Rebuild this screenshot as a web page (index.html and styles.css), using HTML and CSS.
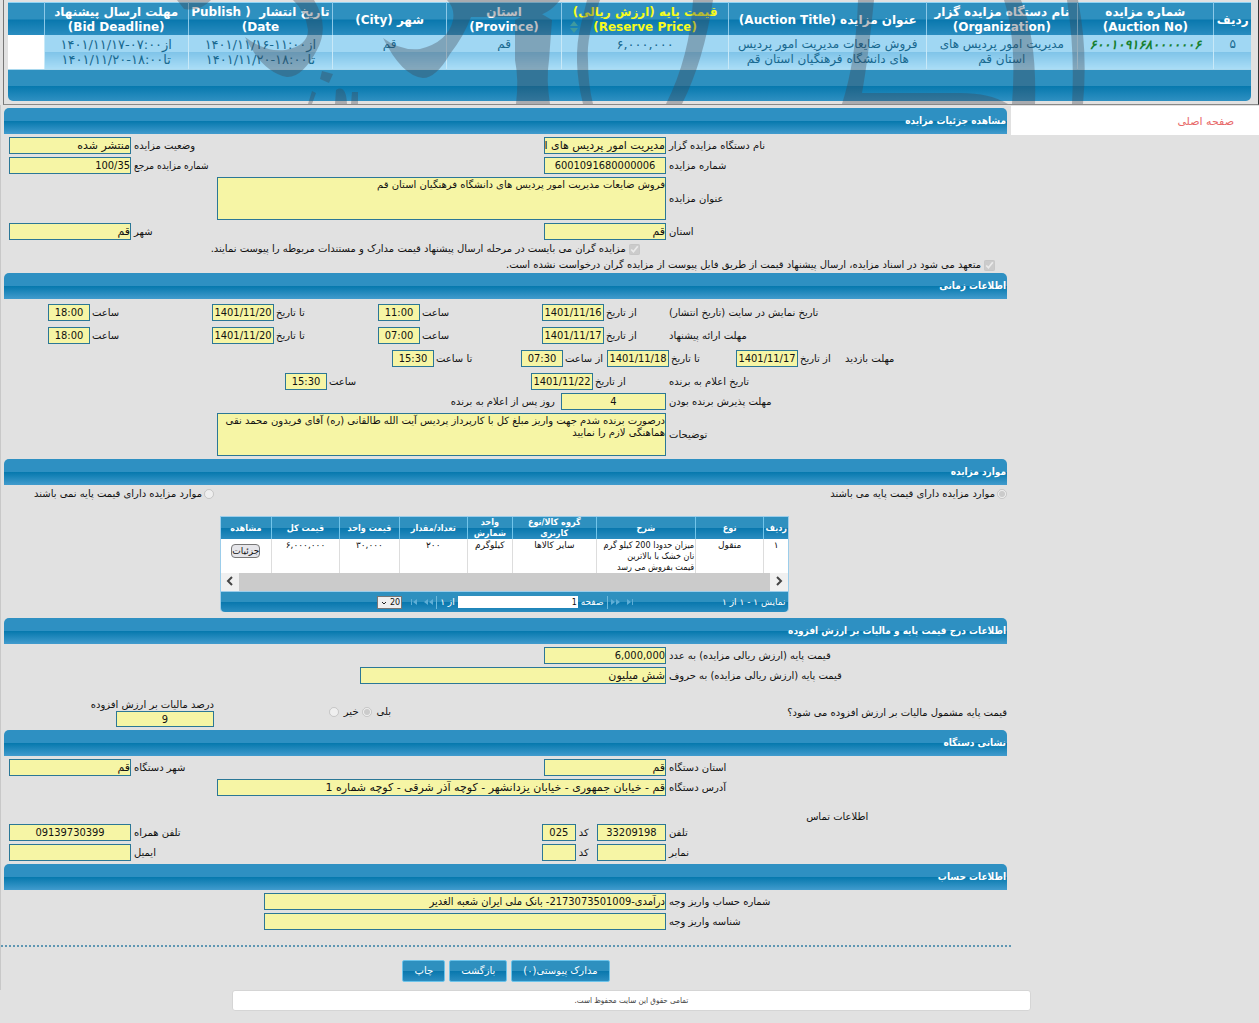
FILE: index.html
```html
<!DOCTYPE html>
<html lang="fa" dir="rtl">
<head>
<meta charset="utf-8">
<title>مشاهده جزئیات مزایده</title>
<meta name="viewport" content="width=device-width, initial-scale=1">
<link rel="stylesheet" href="styles.css">
</head>
<body>
<header class="summary">
  <table class="auctions">
    <colgroup><col class="a1"><col class="a2"><col class="a3"><col class="a4"><col class="a5"><col class="a6"><col class="a7"><col class="a8"><col class="a9"><col class="a10"></colgroup>
    <thead>
      <tr>
        <th>ردیف</th>
        <th>شماره مزایده<br>(Auction No)</th>
        <th>نام دستگاه مزایده گزار<br>(Organization)</th>
        <th>عنوان مزایده (Auction Title)</th>
        <th class="sorted">قیمت پایه (ارزش ریالی)<br>(Reserve Price)<svg class="sort" viewBox="0 0 8 12" aria-hidden="true"><path d="M4 0L8 5H0zM0 7H8L4 12z"/></svg></th>
        <th>استان<br>(Province)</th>
        <th>شهر (City)</th>
        <th>تاریخ انتشار&nbsp; ( Publish<br>Date)</th>
        <th>مهلت ارسال پیشنهاد<br>(Bid Deadline)</th>
        <th></th>
      </tr>
    </thead>
    <tbody>
      <tr>
        <td>۵</td>
        <td class="number">۶۰۰۱۰۹۱۶۸۰۰۰۰۰۰۶</td>
        <td>مدیریت امور پردیس های<br>استان قم</td>
        <td>فروش ضایعات مدیریت امور پردیس<br>های دانشگاه فرهنگیان استان قم</td>
        <td class="large">۶,۰۰۰,۰۰۰</td>
        <td>قم</td>
        <td>قم</td>
        <td class="large">از۱۱:۰۰-۱۴۰۱/۱۱/۱۶<br>تا۱۸:۰۰-۱۴۰۱/۱۱/۲۰</td>
        <td class="large">از۰۷:۰۰-۱۴۰۱/۱۱/۱۷<br>تا۱۸:۰۰-۱۴۰۱/۱۱/۲۰</td>
        <td class="blank"></td>
      </tr>
    </tbody>
  </table>
  <div class="auctions-foot"></div>
  <svg class="watermark" viewBox="4 0 1254 104" preserveAspectRatio="none" aria-hidden="true">
    <path d="M177 0H211Q200 12 184 9zM293 0H314Q330 26 317 50Q302 78 287 77Q262 72 245 37Q265 52 285 50Q308 46 308 30Q306 12 293 0z"/>
    <path d="M447 0H560Q548 16 529 17H471Q464 36 450 54Q436 78 423 78Q402 76 383 38Q400 51 420 49Q448 42 453 20Q455 8 447 0z"/>
    <path d="M515 20L535 10L552 20L549 60Q546 80 550 104H516Q519 80 515 60zM587 0H600Q586 36 588 60Q588 84 593 104H583Q572 60 581 24z"/>
    <path d="M322 71L333 74L329 83L320 79zM312 91L316 93L312 104H308zM336 90Q346 84 347 104H335zM352 92L358 92V104H351z"/>
    <path d="M693 0H713Q704 60 682 104H666Q690 56 693 0zM858 0H874Q868 60 862 93H960Q990 93 1008 104H842Q856 60 858 0zM1004 0H1021Q1037 40 1035 104H1012Q1017 40 1004 0zM1067 0H1078Q1088 50 1083 104H1072Q1075 50 1067 0z"/>
  </svg>
</header>

<div class="page">
  <aside class="side"><nav class="side-nav"><a href="#">صفحه اصلی</a></nav></aside>
  <main class="content">
    <section>
      <h2>مشاهده جزئیات مزایده</h2>
      <div class="body">
        <div class="row std">
          <label for="org">نام دستگاه مزایده گزار</label><div><input id="org" class="f-std" readonly value="مدیریت امور پردیس های استان قم"></div>
          <label for="status">وضعیت مزایده</label><input id="status" readonly value="منتشر شده">
        </div>
        <div class="row std">
          <label for="no">شماره مزایده</label><div><input id="no" class="f-std mid" readonly value="6001091680000006"></div>
          <label for="refno" class="narrow">شماره مزایده مرجع</label><input id="refno" class="narrow" readonly value="100/35">
        </div>
        <div class="row std">
          <label for="title">عنوان مزایده</label><textarea id="title" readonly>فروش ضایعات مدیریت امور پردیس های دانشگاه فرهنگیان استان قم</textarea>
        </div>
        <div class="row std">
          <label for="prov">استان</label><div><input id="prov" class="f-std" readonly value="قم"></div>
          <label for="city">شهر</label><input id="city" readonly value="قم">
        </div>
        <div class="checks">
          <label class="check inset"><input type="checkbox" checked disabled>مزایده گران می بایست در مرحله ارسال پیشنهاد قیمت مدارک و مستندات مربوطه را پیوست نمایند.</label>
          <label class="check"><input type="checkbox" checked disabled>متعهد می شود در اسناد مزایده، ارسال پیشنهاد قیمت از طریق فایل پیوست از مزایده گران درخواست نشده است.</label>
        </div>
      </div>
    </section>

    <section>
      <h2>اطلاعات زمانی</h2>
      <div class="body">
        <div class="row times">
          <span class="name">تاریخ نمایش در سایت (تاریخ انتشار)</span>
          <span class="pair"><label for="p1">از تاریخ</label><input id="p1" class="date" readonly value="1401/11/16"></span>
          <span class="pair"><label for="p2">ساعت</label><input id="p2" class="time" readonly value="11:00"></span>
          <span class="pair"><label for="p3">تا تاریخ</label><input id="p3" class="date" readonly value="1401/11/20"></span>
          <span class="pair"><label for="p4">ساعت</label><input id="p4" class="time" readonly value="18:00"></span>
        </div>
        <div class="row times">
          <span class="name">مهلت ارائه پیشنهاد</span>
          <span class="pair"><label for="o1">از تاریخ</label><input id="o1" class="date" readonly value="1401/11/17"></span>
          <span class="pair"><label for="o2">ساعت</label><input id="o2" class="time" readonly value="07:00"></span>
          <span class="pair"><label for="o3">تا تاریخ</label><input id="o3" class="date" readonly value="1401/11/20"></span>
          <span class="pair"><label for="o4">ساعت</label><input id="o4" class="time" readonly value="18:00"></span>
        </div>
        <div class="row times visit">
          <span class="name">مهلت بازدید</span>
          <span class="pair"><label for="v1">از تاریخ</label><input id="v1" class="date" readonly value="1401/11/17"></span>
          <span class="pair"><label for="v2">تا تاریخ</label><input id="v2" class="date" readonly value="1401/11/18"></span>
          <span class="pair"><label for="v3">از ساعت</label><input id="v3" class="time" readonly value="07:30"></span>
          <span class="pair"><label for="v4">تا ساعت</label><input id="v4" class="time" readonly value="15:30"></span>
        </div>
        <div class="row times winner">
          <span class="name">تاریخ اعلام به برنده</span>
          <span class="pair"><label for="w1">از تاریخ</label><input id="w1" class="date" readonly value="1401/11/22"></span>
          <span class="pair"><label for="w2">ساعت</label><input id="w2" class="time" readonly value="15:30"></span>
        </div>
        <div class="row std">
          <label for="accept">مهلت پذیرش برنده بودن</label>
          <div class="line"><input id="accept" class="f-days mid" readonly value="4"><span>روز پس از اعلام به برنده</span></div>
        </div>
        <div class="row std">
          <label for="notes">توضیحات</label><textarea id="notes" readonly>درصورت برنده شدم جهت واریز مبلغ کل با کارپرداز پردیس آیت الله طالقانی (ره) آقای فریدون محمد نقی
هماهنگی لازم را نمایید</textarea>
        </div>
      </div>
    </section>

    <section>
      <h2>موارد مزایده</h2>
      <div class="body">
        <div class="base-choice">
          <label class="radio"><input type="radio" name="base" checked disabled>موارد مزایده دارای قیمت پایه می باشند</label>
          <label class="radio"><input type="radio" name="base" disabled>موارد مزایده دارای قیمت پایه نمی باشند</label>
        </div>
        <div class="grid-box">
          <table class="items">
            <colgroup><col class="i1"><col class="i2"><col class="i3"><col class="i4"><col class="i5"><col class="i2"><col class="i7"><col class="i2"><col class="i9"></colgroup>
            <thead><tr><th>ردیف</th><th>نوع</th><th>شرح</th><th>گروه کالا/نوع<br>کاربری</th><th>واحد<br>شمارش</th><th>تعداد/مقدار</th><th>قیمت واحد</th><th>قیمت کل</th><th>مشاهده</th></tr></thead>
            <tbody><tr><td>۱</td><td>منقول</td><td class="desc">میزان حدودا 200 کیلو گرم<br>نان خشک با بالاترین<br>قیمت بفروش می رسد</td><td>سایر کالاها</td><td>کیلوگرم</td><td>۲۰۰</td><td>۳۰,۰۰۰</td><td>۶,۰۰۰,۰۰۰</td><td><button class="detail" type="button">جزئیات</button></td></tr></tbody>
          </table>
          <div class="scroll">
            <button type="button" aria-label="راست"><svg viewBox="0 0 8 10"><path d="M2 1l4 4-4 4"/></svg></button>
            <button type="button" aria-label="چپ"><svg viewBox="0 0 8 10"><path d="M6 1L2 5l4 4"/></svg></button>
          </div>
          <div class="pager">
            <span>نمایش ۱ - ۱ از ۱</span>
            <div class="pages">
              <svg class="skip" viewBox="0 0 24 8" aria-hidden="true"><path d="M0 1l4 3-4 3zM5 1l4 3-4 3zM16 1l4 3-4 3zM21 1h1v6h-1z"/></svg>
              <i class="sep"></i>
              <label for="pg">صفحه</label><input id="pg" value="1"><span>از ۱</span>
              <i class="sep"></i>
              <svg class="skip" viewBox="0 0 24 8" aria-hidden="true"><path d="M24 1l-4 3 4 3zM19 1l-4 3 4 3zM8 1L4 4l4 3zM2 1h1v6H2z"/></svg>
              <span class="size"><select aria-label="تعداد"><option>20</option></select><svg viewBox="0 0 6 4" aria-hidden="true"><path d="M1 1l2 2 2-2"/></svg></span>
            </div>
          </div>
        </div>
      </div>
    </section>

    <section>
      <h2>اطلاعات درج قیمت پایه و مالیات بر ارزش افزوده</h2>
      <div class="body">
        <div class="row std"><label for="num">قیمت پایه (ارزش ریالی مزایده) به عدد</label><div><input id="num" class="f-std narrow" readonly value="6,000,000"></div></div>
        <div class="row std"><label for="word">قیمت پایه (ارزش ریالی مزایده) به حروف</label><div><input id="word" class="f-words" readonly value="شش میلیون"></div></div>
        <div class="vat">
          <span class="ask">قیمت پایه مشمول مالیات بر ارزش افزوده می شود؟</span>
          <span class="yesno"><label>بلی <input type="radio" name="vat" checked disabled></label><label>خیر <input type="radio" name="vat" disabled></label></span>
          <span class="rate"><label for="rate">درصد مالیات بر ارزش افزوده</label><input id="rate" class="mid" readonly value="9"></span>
        </div>
      </div>
    </section>

    <section>
      <h2>نشانی دستگاه</h2>
      <div class="body">
        <div class="row std">
          <label for="oprov">استان دستگاه</label><div><input id="oprov" class="f-std" readonly value="قم"></div>
          <label for="ocity">شهر دستگاه</label><input id="ocity" readonly value="قم">
        </div>
        <div class="row std"><label for="addr">آدرس دستگاه</label><input id="addr" readonly value="قم - خیابان جمهوری - خیابان یزدانشهر - کوچه آذر شرقی - کوچه شماره 1"></div>
        <p class="contact">اطلاعات تماس</p>
        <div class="row std">
          <label for="tel">تلفن</label>
          <div class="line tel"><input id="tel" class="f-tel mid" readonly value="33209198"><label for="telc">کد</label><input id="telc" class="f-code mid" readonly value="025"></div>
          <label for="mob">تلفن همراه</label><input id="mob" class="mid" readonly value="09139730399">
        </div>
        <div class="row std">
          <label for="fax">نمابر</label>
          <div class="line tel"><input id="fax" class="f-tel" readonly><label for="faxc">کد</label><input id="faxc" class="f-code" readonly></div>
          <label for="mail">ایمیل</label><input id="mail" readonly>
        </div>
      </div>
    </section>

    <section>
      <h2>اطلاعات حساب</h2>
      <div class="body">
        <div class="row std"><label for="acc">شماره حساب واریز وجه</label><div><input id="acc" class="f-acc narrow" readonly value="درآمدی-2173073501009- بانک ملی ایران شعبه الغدیر"></div></div>
        <div class="row std"><label for="accid">شناسه واریز وجه</label><div><input id="accid" class="f-acc" readonly></div></div>
      </div>
    </section>

    <div class="actions">
      <button type="button">مدارک پیوستی(۰)</button>
      <button type="button">بازگشت</button>
      <button type="button">چاپ</button>
    </div>
  </main>
</div>
<footer class="foot">تمامی حقوق این سایت محفوظ است.</footer>
</body>
</html>
```

FILE: styles.css
```css
* { box-sizing: border-box; }

body {
  margin: 0;
  background: #e1e1e1;
  color: #111;
  font: 10px/12px "DejaVu Sans", sans-serif;
}

button, input, select, textarea { font: inherit; color: inherit; margin: 0; }

/* Summary table */
.summary {
  position: relative;
  margin-left: 3px;
  padding: 2px 7px 3px 4px;
  border-bottom: 1px solid #888;
  border-left: 1px solid #777;
  border-right: 1px solid #333;
}
.auctions {
  width: 100%;
  table-layout: fixed;
  border-collapse: collapse;
  border-top: 1px solid #8fd4f4;
  font-size: 12px;
  line-height: 15px;
  text-align: center;
}
.a1 { width: 3%; } .a2 { width: 11%; } .a3 { width: 12.1%; } .a4 { width: 15.9%; }
.a5 { width: 13.5%; } .a6 { width: 9.2%; } .a7 { width: 9.2%; } .a8 { width: 11.6%; }
.a9 { width: 11.6%; } .a10 { width: 2.9%; }
.auctions th, .auctions td { padding: 2px 0 0; white-space: nowrap; border-left: 1px solid #8cc9e8; }
.auctions th {
  height: 32px;
  color: #fff;
  background: linear-gradient(#2e90bf 50%, #0877ad 50%, #2b8dc0);
}
.auctions td {
  height: 34px;
  vertical-align: top;
  color: #17688f;
  border-left-color: #c8e9f8;
  background: linear-gradient(#a0d7f3 50%, #7fc3e8 50%, #a9ddf6);
}
.auctions th:last-child, .auctions td:last-child { border-left: 0; }
.auctions .sorted { position: relative; color: #f7fb1e; }
.sort { position: absolute; left: 8px; bottom: 2px; width: 8px; height: 12px; fill: #3f9a9f; }
.auctions .large { font-size: 13px; }
.auctions .number { color: #178030; font-style: italic; font-weight: bold; font-size: 13px; }
.auctions .blank { background: #fff; }
.auctions-foot {
  height: 32px;
  border-top: 1px solid #a9d8ee;
  border-radius: 0 0 5px 5px;
  background: linear-gradient(#2e90bf 50%, #0578ad 50%, #2f90c2);
}
.watermark {
  position: absolute;
  inset: 0;
  width: 100%;
  height: 100%;
  fill: #3f4450;
  opacity: .34;
  pointer-events: none;
}

/* Page frame */
.page { display: flex; border-left: 1px solid #c8c8c8; }
.side { flex: 0 0 248px; padding-top: 1px; }
.side-nav {
  height: 29px;
  padding: 10px 25px;
  background: #fff;
  font-size: 11px;
}
.side-nav a { color: #e86a6a; text-decoration: none; }
.content { flex: 1; min-width: 0; padding-top: 3px; }
section { margin: 0 4px 0 3px; }

h2 {
  display: flex;
  align-items: center;
  height: 26px;
  margin: 0;
  padding: 0 1px;
  border-radius: 5px 5px 0 0;
  color: #fff;
  font-family: "DejaVu Sans Condensed", "DejaVu Sans", sans-serif;
  font-size: 10px;
  line-height: 14px;
  background: linear-gradient(#2e90c2 50%, #0578ad 50%, #419bcd);
}
.body { padding: 3px 0 0 5px; }

/* Form rows */
.row { display: grid; column-gap: 3px; align-items: center; margin-bottom: 3px; }
.std { grid-template-columns: 338fr 449fr 80fr 122fr; }
.std > * { min-width: 0; }
.std > label { white-space: nowrap; text-align: left; }
.std > div { display: flex; }

input:not([type]), textarea {
  display: block;
  width: 100%;
  height: 17px;
  padding: 0;
  border: 1px solid #2b7796;
  border-radius: 0;
  outline: 0;
  background: #f6f5a5;
  font-size: 11px;
}
textarea {
  height: 43px;
  padding-top: 1px;
  font-size: 10px;
  line-height: 12px;
  resize: none;
  overflow: hidden;
}
.mid, .narrow, .date, .time { font-family: "DejaVu Sans Condensed", "DejaVu Sans", sans-serif; }
.mid, .date, .time { text-align: center; }

input.f-std { width: 122px; }
input.f-days { width: 23.4%; }
input.f-words { width: 68.2%; }
input.f-acc { width: 89.5%; }
input.f-tel { width: 15.4%; }
input.f-code { width: 7.6%; }
input.date { width: 62px; }
input.time { width: 42px; }

.line { align-items: center; gap: 6px; }
.tel { gap: 0; }
.tel label { flex: 0 0 21px; padding-right: 8px; }

.checks { margin-top: -2px; }
.check { display: flex; align-items: center; gap: 3px; height: 16px; padding-right: 1.2%; white-space: nowrap; }
.check input { width: 11px; height: 11px; }
.inset { padding-right: 36.8%; }

.times {
  grid-template-columns: 338fr 127fr 164fr 166fr 164fr 39fr;
  column-gap: 0;
  margin: 2px 0 6px;
}
.times + .times { margin-top: 0; }
.visit { grid-template-columns: 162fr 109fr 129fr 86fr 129fr 383fr; }
.winner { grid-template-columns: 338fr 138fr 246fr 276fr; margin-bottom: 3px; }
.name { text-align: left; white-space: nowrap; }
.pair { display: flex; justify-content: flex-end; align-items: center; gap: 2px; white-space: nowrap; }

/* Items */
.base-choice { display: grid; grid-template-columns: 793fr 205fr; margin-bottom: 16px; }
.radio { display: flex; align-items: center; gap: 2px; white-space: nowrap; }
input[type="radio"] { width: 10px; height: 10px; }
.grid-box {
  width: 57.1%;
  margin-right: 21.8%;
  margin-bottom: 6px;
  border: 1px solid #9ccdea;
  border-bottom: 0;
  border-radius: 0 0 4px 4px;
}
.items { width: 100%; table-layout: fixed; border-collapse: collapse; text-align: center; line-height: 11px; }
.i1 { width: 4.4%; } .i2 { width: 12%; } .i3 { width: 17.6%; } .i4 { width: 14.8%; }
.i5 { width: 8%; } .i7 { width: 10.6%; } .i9 { width: 9%; }
.items th, .items td { padding: 0; white-space: nowrap; }
.items th {
  height: 22px;
  border-left: 1px solid #72c5ea;
  color: #fff;
  font-family: "DejaVu Sans Condensed", "DejaVu Sans", sans-serif;
  font-size: 9px;
  background: linear-gradient(#2e90bf 50%, #0877ad 50%, #2b8dc0);
}
.items td {
  height: 34px;
  padding-top: 1px;
  vertical-align: top;
  border-left: 1px solid #ddd;
  background: #fff;
  font-size: 9px;
}
.items .desc {
  padding-right: 1px;
  font-family: "DejaVu Sans Condensed", "DejaVu Sans", sans-serif;
  text-align: right;
}
.items th:last-child, .items td:last-child { border-left: 0; }
.detail {
  margin-top: 4px;
  padding: 0;
  border: 1px solid #777;
  border-radius: 4px;
  background: #e6e6ea;
  font-size: 9px;
  line-height: 12px;
}
.scroll { display: flex; justify-content: space-between; height: 18px; background: #cbcbcb; }
.scroll button { width: 18px; padding: 0; border: 0; background: #f0f0f0; }
.scroll svg { width: 8px; height: 10px; fill: none; stroke: #444; stroke-width: 2; }
.pager {
  display: grid;
  grid-template-columns: 152fr 417fr;
  align-items: center;
  height: 21px;
  padding-right: 3px;
  border-top: 1px solid #9ccdea;
  border-radius: 0 0 4px 4px;
  color: #fff;
  font-size: 9px;
  background: linear-gradient(#2e90bf 50%, #0877ad 50%, #2b8dc0);
}
.pages { display: flex; align-items: center; gap: 3px; }
.pages input:not([type]) {
  width: 120px;
  height: 12px;
  border-color: #fff;
  background: #fff;
  color: #111;
  font-size: 8px;
  line-height: 10px;
}
.size { position: relative; display: flex; margin-right: 4px; }
.size select {
  appearance: none;
  width: 25px;
  height: 13px;
  padding: 0 1px;
  border: 1px solid #767676;
  border-radius: 0;
  background: #efefef;
  color: #111;
  font-size: 8px;
  line-height: 11px;
}
.size svg { position: absolute; left: 4px; top: 5px; width: 6px; height: 4px; fill: none; stroke: #222; }
.skip { width: 24px; height: 8px; fill: #5faed6; }
.sep { width: 1px; height: 13px; background: #6db9dc; }

/* VAT */
.vat {
  display: grid;
  grid-template-columns: 616fr 177fr 205fr;
  align-items: center;
  height: 42px;
  margin-bottom: 1px;
  white-space: nowrap;
}
.ask { padding-top: 10px; }
.yesno { display: flex; gap: 3px; padding-top: 8px; }
.yesno label { display: flex; align-items: center; gap: 5px; }
.rate { padding-top: 10px; }
.rate input.mid { width: 98px; height: 16px; }

.contact { height: 25px; margin: 0; padding: 12px 13.9% 0 0; }

.actions {
  display: flex;
  justify-content: center;
  gap: 4px;
  margin-top: 15px;
  padding: 13px 0 8px;
  border-top: 2px dotted #5f97b3;
}
.actions button {
  height: 22px;
  padding: 0 11px;
  border: 1px solid #6cc3ea;
  border-radius: 2px;
  color: #fff;
  background: linear-gradient(#2e90bf 50%, #0877ad 50%, #2b8dc0);
}
.foot {
  width: 63.5%;
  height: 21px;
  margin: 0 18.1% 0 0;
  border: 1px solid #d5d5d5;
  border-radius: 3px;
  background: #fff;
  color: #444;
  font-family: "DejaVu Sans Condensed", "DejaVu Sans", sans-serif;
  font-size: 8px;
  line-height: 19px;
  text-align: center;
}
```
